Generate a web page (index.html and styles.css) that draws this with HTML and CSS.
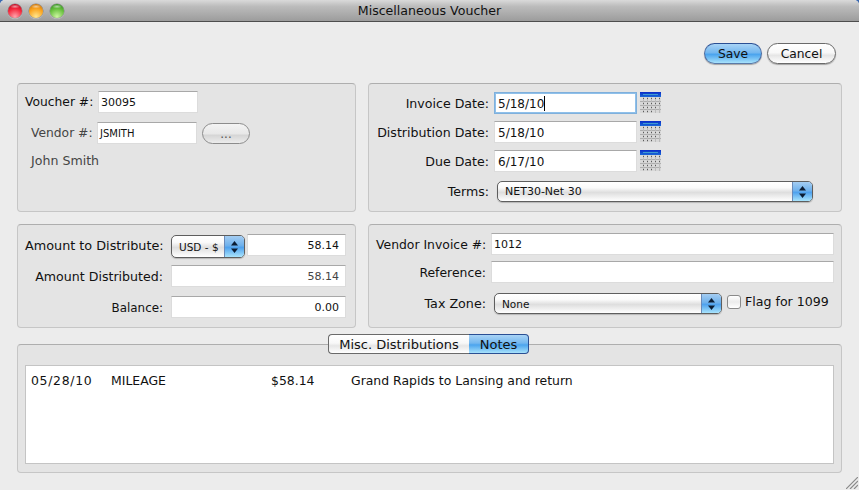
FILE: index.html
```html
<!DOCTYPE html>
<html lang="en">
<head>
<meta charset="utf-8">
<title>Miscellaneous Voucher</title>
<link rel="stylesheet" href="styles.css">
</head>
<body>
<svg class="defs" width="0" height="0" aria-hidden="true">
  <defs>
    <linearGradient id="calhead" x1="0" y1="0" x2="0" y2="1">
      <stop offset="0" stop-color="#0a2cc8"/><stop offset="1" stop-color="#1a6ad8"/>
    </linearGradient>
    <symbol id="cal" viewBox="0 0 21 21">
      <rect x="0" y="0" width="21" height="21" fill="#d8d8d8"/>
      <rect x="0" y="0" width="21" height="5" fill="url(#calhead)"/>
      <path d="M3 2.500H18" stroke="#3f9ad0" stroke-width="1"/>
      <path d="M0 9.500H21M0 13.500H21M0 17.500H21" stroke="#aeaeae" stroke-width="1"/>
      <path d="M3.500 5V21M7.500 5V21M11.500 5V21M15.500 5V21M19.500 5V21" stroke="#bcbcbc" stroke-width="1"/>
      <path d="M3 6.500H4M7 6.500H8M11 6.500H12M15 6.500H16M19 6.500H20M3 11.500H4M7 11.500H8M11 11.500H12M15 11.500H16M19 11.500H20M3 15.500H4M7 15.500H8M11 15.500H12M15 15.500H16M3 19.500H4M7 19.500H8M11 19.500H12" stroke="#5c5c5c" stroke-width="1"/>
    </symbol>
    <symbol id="updown" viewBox="0 0 7 12">
      <path d="M3.500 0L7 4.500H0Z" fill="#0b1c33"/>
      <path d="M3.500 12L0 7.500H7Z" fill="#0b1c33"/>
    </symbol>
  </defs>
</svg>
<div class="window">
  <header class="titlebar">
    <div class="lights">
      <span class="light red"></span>
      <span class="light amber"></span>
      <span class="light green"></span>
    </div>
    <div class="title">Miscellaneous Voucher</div>
  </header>
  <main class="content">
    <div class="toolbar">
      <button class="btn btn-primary">Save</button>
      <button class="btn btn-plain">Cancel</button>
    </div>
    <div class="grid-row row-top">
      <section class="panel voucher">
        <div class="vrow">
          <span class="label lbl-voucher">Voucher #:</span>
          <div class="field f-voucher">30095</div>
        </div>
        <div class="vrow vrow-vendor">
          <span class="label muted lbl-vendor">Vendor #:</span>
          <div class="field f-vendor">JSMITH</div>
          <button class="btn-more">...</button>
        </div>
        <div class="vendor-name">John Smith</div>
      </section>
      <section class="panel dates">
        <div class="drow">
          <span class="label lbl-date">Invoice Date:</span>
          <div class="field f-date focused">5/18/10<span class="caret"></span></div>
          <svg class="cal" width="21" height="21"><use href="#cal"/></svg>
        </div>
        <div class="drow">
          <span class="label lbl-date">Distribution Date:</span>
          <div class="field f-date">5/18/10</div>
          <svg class="cal" width="21" height="21"><use href="#cal"/></svg>
        </div>
        <div class="drow">
          <span class="label lbl-date">Due Date:</span>
          <div class="field f-date">6/17/10</div>
          <svg class="cal" width="21" height="21"><use href="#cal"/></svg>
        </div>
        <div class="drow drow-terms">
          <span class="label lbl-date">Terms:</span>
          <div class="select s-terms"><span class="select-text">NET30-Net 30</span><span class="stepper"><svg width="7" height="12"><use href="#updown"/></svg></span></div>
        </div>
      </section>
    </div>
    <div class="grid-row row-mid">
      <section class="panel amounts">
        <div class="arow">
          <span class="label lbl-amt lbl-first">Amount to Distribute:</span>
          <div class="select s-cur"><span class="select-text">USD - $</span><span class="stepper"><svg width="7" height="12"><use href="#updown"/></svg></span></div>
          <div class="field f-amt num">58.14</div>
        </div>
        <div class="arow">
          <span class="label lbl-amt">Amount Distributed:</span>
          <div class="field f-wide num dim">58.14</div>
        </div>
        <div class="arow">
          <span class="label lbl-amt lbl-tight">Balance:</span>
          <div class="field f-wide num">0.00</div>
        </div>
      </section>
      <section class="panel invoice">
        <div class="irow">
          <span class="label lbl-inv">Vendor Invoice #:</span>
          <div class="field f-inv">1012</div>
        </div>
        <div class="irow">
          <span class="label lbl-inv lbl-tight">Reference:</span>
          <div class="field f-inv"></div>
        </div>
        <div class="irow irow-tax">
          <span class="label lbl-inv">Tax Zone:</span>
          <div class="select s-tax"><span class="select-text">None</span><span class="stepper"><svg width="7" height="12"><use href="#updown"/></svg></span></div>
          <span class="checkbox"></span>
          <span class="label check-label">Flag for 1099</span>
        </div>
      </section>
    </div>
    <section class="panel notes">
      <div class="tabs">
        <div class="tab">Misc. Distributions</div>
        <div class="tab tab-active">Notes</div>
      </div>
      <div class="notes-box">
        <div class="note">
          <span class="note-date">05/28/10</span>
          <span class="note-type">MILEAGE</span>
          <span class="note-amt">$58.14</span>
          <span>Grand Rapids to Lansing and return</span>
        </div>
      </div>
    </section>
  </main>
  <svg class="grip" width="12" height="12" viewBox="0 0 12 12">
    <path d="M0 12L12 0M4 12L12 4M8 12L12 8" stroke="#8a8a8a" stroke-width="1.200"/>
  </svg>
</div>
</body>
</html>
```
FILE: styles.css
```css
* { box-sizing: border-box; }
html, body { margin: 0; padding: 0; }
html { background: #3a68b0; }
body {
  width: 859px;
  height: 490px;
  overflow: hidden;
  font-family: "DejaVu Sans", sans-serif;
  font-size: 12px;
  color: #111;
}
.defs { position: absolute; }
.window {
  position: relative;
  width: 859px;
  height: 490px;
  background: #ececec;
  border-radius: 5px 5px 0 0;
  overflow: hidden;
}
.titlebar {
  position: relative;
  height: 22px;
  background: linear-gradient(#dadada, #bcbcbc 30%, #9c9c9c);
  border-bottom: 1px solid #4e4e4e;
  display: flex;
  align-items: center;
  justify-content: center;
}
.lights {
  position: absolute;
  left: 8px;
  top: 4px;
  display: flex;
  gap: 7px;
}
.light {
  width: 14px;
  height: 14px;
  border-radius: 50%;
  box-shadow: 0 0 0 .5px rgba(60,60,60,.5), 0 1px 1px rgba(255,255,255,.6);
}
.red { background: radial-gradient(ellipse 5px 2px at 50% 18%, rgba(255,255,255,.55), transparent), radial-gradient(circle at 50% 90%, #ffa4ac, #f5283c 55%, #a80018); }
.amber { background: radial-gradient(ellipse 5px 2px at 50% 18%, rgba(255,255,255,.55), transparent), radial-gradient(circle at 50% 90%, #ffe68e, #fba41e 55%, #bc6400); }
.green { background: radial-gradient(ellipse 5px 2px at 50% 18%, rgba(255,255,255,.55), transparent), radial-gradient(circle at 50% 90%, #ccf6a0, #68c03e 55%, #26821a); }
.title {
  font-size: 12.600px;
  color: #111;
  line-height: 22px;
  padding-top: 1px;
}
.content { padding: 0 17px; }
.toolbar {
  height: 61px;
  padding: 21px 6px 0 0;
  display: flex;
  justify-content: flex-end;
  align-items: flex-start;
  gap: 5px;
}
.btn {
  height: 21px;
  border-radius: 11px;
  font: 12.300px "DejaVu Sans", sans-serif;
  color: #111;
  padding: 0;
  border: 1px solid #6a6a6a;
}
.btn-primary {
  width: 58px;
  border-color: #2a4f94 #4a6aa0 #5a7aa8;
  background: linear-gradient(#a9d4f6, #74b7ef 45%, #4ba4ee 55%, #a8e2fb);
  box-shadow: 0 1px 1px rgba(0,0,0,.3);
}
.btn-plain {
  width: 69px;
  background: linear-gradient(#fff, #f8f8f8 45%, #e6e6e6 60%, #fff);
  box-shadow: 0 1px 1px rgba(0,0,0,.3);
}
.grid-row {
  display: grid;
  grid-template-columns: 339px 474px;
  column-gap: 12px;
}
.row-top { height: 129px; }
.row-mid { height: 104px; margin-top: 12px; }
.panel {
  background: #e4e4e4;
  border: 1px solid #c6c6c6;
  border-top-color: #aeaeae;
  border-radius: 4px;
}
.label {
  font-size: 12.600px;
  line-height: 24px;
  white-space: nowrap;
  color: #111;
}
.muted { color: #444; }
.field {
  height: 22px;
  background: #fff;
  border: 1px solid #dcdcdc;
  border-top-color: #a8a8a8;
  font-size: 11px;
  line-height: 21px;
  padding: 0 2px;
  color: #111;
  white-space: nowrap;
}
.num { text-align: right; padding-right: 6px; }
.dim { color: #444; }

.voucher { padding: 7px 0 0 7px; }
.vrow { display: flex; height: 22px; }
.vrow-vendor { margin-top: 9px; padding-left: 6px; }
.lbl-voucher { width: 68px; margin-right: 5px; font-size: 12.300px; line-height: 23px; }
.lbl-vendor { width: 61px; margin-right: 5px; font-size: 12.300px; line-height: 22px; }
.f-voucher { width: 100px; line-height: 22px; }
.f-vendor { width: 100px; padding-left: 2px; font-size: 10px; }
.btn-more {
  width: 48px;
  height: 21px;
  margin: 1px 0 0 5px;
  border: 1px solid #8c8c8c;
  border-radius: 11px;
  background: linear-gradient(#f4f4f4, #e8e8e8 50%, #d6d6d6 60%, #ececec);
  font: 12px "DejaVu Sans", sans-serif;
  color: #555;
  padding: 0;
}
.vendor-name {
  margin: 8px 0 0 6px;
  line-height: 18px;
  color: #444;
  font-size: 12.600px;
}

.dates { padding: 8px 0 0 7px; }
.drow { display: flex; align-items: flex-start; height: 22px; margin-bottom: 7px; }
.lbl-date { width: 113px; margin-right: 5px; text-align: right; line-height: 23px; }
.f-date { width: 143px; font-size: 12px; padding-left: 3px; line-height: 22px; }
.cal { margin-left: 3px; display: block; }
.focused {
  border: 1px solid #7fb0dc;
  box-shadow: 0 0 0 1px #8fc0ea inset;
}
.caret {
  display: inline-block;
  width: 1px;
  height: 15px;
  background: #000;
  vertical-align: -3px;
}
.drow-terms { margin-top: 9px; margin-bottom: 0; }
.drow-terms .label { line-height: 22px; }

.select {
  display: flex;
  border: 1px solid #5e5e5e;
  border-radius: 5px;
  background: linear-gradient(#fff, #fafafa 30%, #dedede 55%, #fff);
  overflow: hidden;
  box-shadow: 0 1px 1px rgba(0,0,0,.2);
  font-size: 10.500px;
}
.select-text { flex: 1; padding-left: 7px; white-space: nowrap; align-self: center; }
.stepper {
  width: 20px;
  background: linear-gradient(#a4cdf2, #6fb1ec 45%, #4fa2ee 55%, #a9e4fc);
  border-left: 1px solid #6a8ab8;
  display: flex;
  align-items: center;
  justify-content: center;
}
.s-terms { width: 316px; height: 21px; margin-left: 3px; }
.s-terms .select-text { font-size: 11px; }
.s-cur { width: 74px; height: 23px; margin: 1px 0 -2px 0; }
.s-tax { width: 228px; height: 21px; margin-left: 3px; }

.amounts { padding: 9px 0 0 7px; }
.arow { display: flex; height: 22px; margin-bottom: 9px; }
.lbl-amt { width: 138px; margin-right: 8px; text-align: right; }
.lbl-first { font-size: 12.800px; line-height: 23px; }
.lbl-tight { font-size: 11.900px; }
.f-amt { width: 99px; margin-left: 2px; }
.f-wide { width: 175px; }

.invoice { padding: 8px 0 0 7px; }
.irow { display: flex; height: 22px; margin-bottom: 6px; }
.lbl-inv { width: 110px; margin-right: 5px; text-align: right; font-size: 12.400px; line-height: 23px; }
.f-inv { width: 343px; line-height: 22px; }
.irow-tax { margin-top: 10px; margin-bottom: 0; }
.irow-tax .lbl-inv { font-size: 12.700px; line-height: 22px; }
.checkbox {
  width: 14px;
  height: 14px;
  margin: 2px 4px 0 5px;
  border: 1px solid #8a8a8a;
  border-radius: 3px;
  background: linear-gradient(#fff, #ececec 50%, #fff);
}
.check-label { line-height: 18px; }

.notes {
  height: 129px;
  margin-top: 16px;
  display: flex;
  flex-direction: column;
}
.tabs {
  display: flex;
  height: 20px;
  width: 201px;
  margin: -11px 0 0 310px;
  position: relative;
}
.tab {
  width: 141px;
  height: 20px;
  border: 1px solid #6a6a6a;
  border-right: 0;
  border-radius: 4px 0 0 4px;
  background: linear-gradient(#fff, #f8f8f8 45%, #e6e6e6 60%, #fff);
  text-align: center;
  line-height: 19px;
  font-size: 13px;
}
.tab-active {
  width: 60px;
  border: 1px solid #2a4f94;
  border-left: 0;
  border-radius: 0 4px 4px 0;
  background: linear-gradient(#a9d4f6, #74b7ef 45%, #4ba4ee 55%, #a8e2fb);
}
.notes-box {
  margin: 11px 7px 0;
  height: 99px;
  background: #fff;
  border: 1px solid #c4c4c4;
  padding: 6px 5px;
}
.note { display: flex; line-height: 18px; white-space: nowrap; font-size: 12.450px; }
.note-date, .note-type, .note-amt { display: block; }
.note-date { width: 80px; letter-spacing: .7px; }
.note-type { width: 160px; }
.note-amt { width: 80px; }
.grip { position: absolute; right: 1px; bottom: 1px; }
```
